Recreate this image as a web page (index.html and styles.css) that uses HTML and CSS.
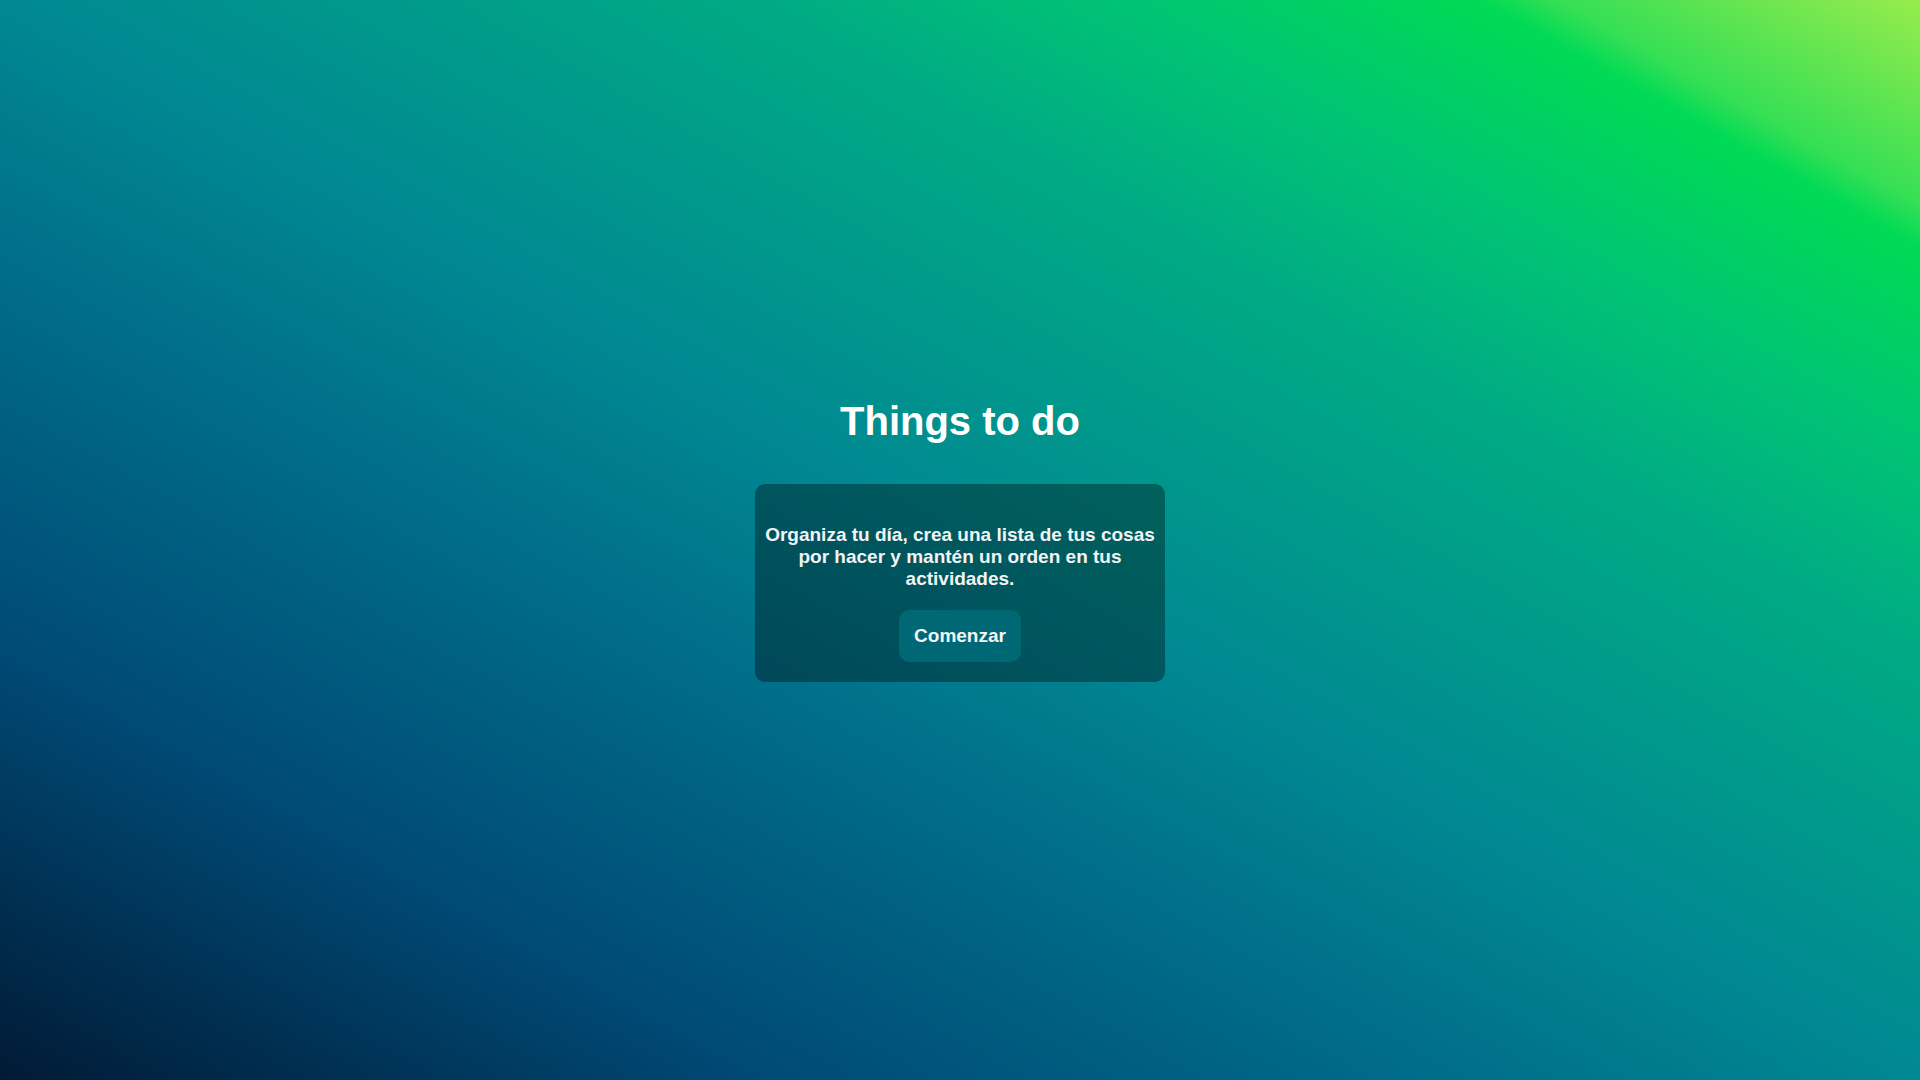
FILE: index.html
```html
<!DOCTYPE html>
<html lang="es">
<head>
<meta charset="utf-8">
<title>Things to do</title>
<link rel="stylesheet" href="styles.css">
</head>
<body>
<main class="intro">
  <h1 class="intro-title">Things to do</h1>
  <section class="intro-card">
    <p class="intro-text">Organiza tu día, crea una lista de tus cosas por hacer y mantén un orden en tus actividades.</p>
    <button class="intro-button" type="button">Comenzar</button>
  </section>
</main>
</body>
</html>
```
FILE: styles.css
```css
html, body {
  margin: 0;
  height: 100%;
}
body {
  font-family: "Liberation Sans", Arial, sans-serif;
  background: linear-gradient(to right top,
    #011a35 0%,
    #004a75 20%,
    #006c89 37%,
    #008892 50%,
    #00ab84 70%,
    #00c375 79%,
    #00da55 88.5%,
    #35df55 90.5%,
    #98ec4c 100%);
  color: #fff;
}
.intro {
  height: 100%;
  display: flex;
  flex-direction: column;
  align-items: center;
  justify-content: center;
}
.intro-title {
  margin: 0 0 40px;
  font-size: 40px;
  font-weight: bold;
  line-height: 46px;
  color: #fff;
}
.intro-card {
  width: 410px;
  box-sizing: border-box;
  padding: 21px 10px 20px;
  background: rgba(0, 0, 0, 0.35);
  border-radius: 10px;
  display: flex;
  flex-direction: column;
  align-items: center;
}
.intro-text {
  margin: 19px 0 20px;
  font-size: 19px;
  line-height: 22px;
  font-weight: bold;
  text-align: center;
  color: #f2f4f4;
}
.intro-button {
  font-family: inherit;
  font-size: 19px;
  font-weight: bold;
  line-height: 22px;
  color: #f4f6f6;
  background: #006774;
  border: none;
  border-radius: 10px;
  padding: 15px 15px;
}
```
